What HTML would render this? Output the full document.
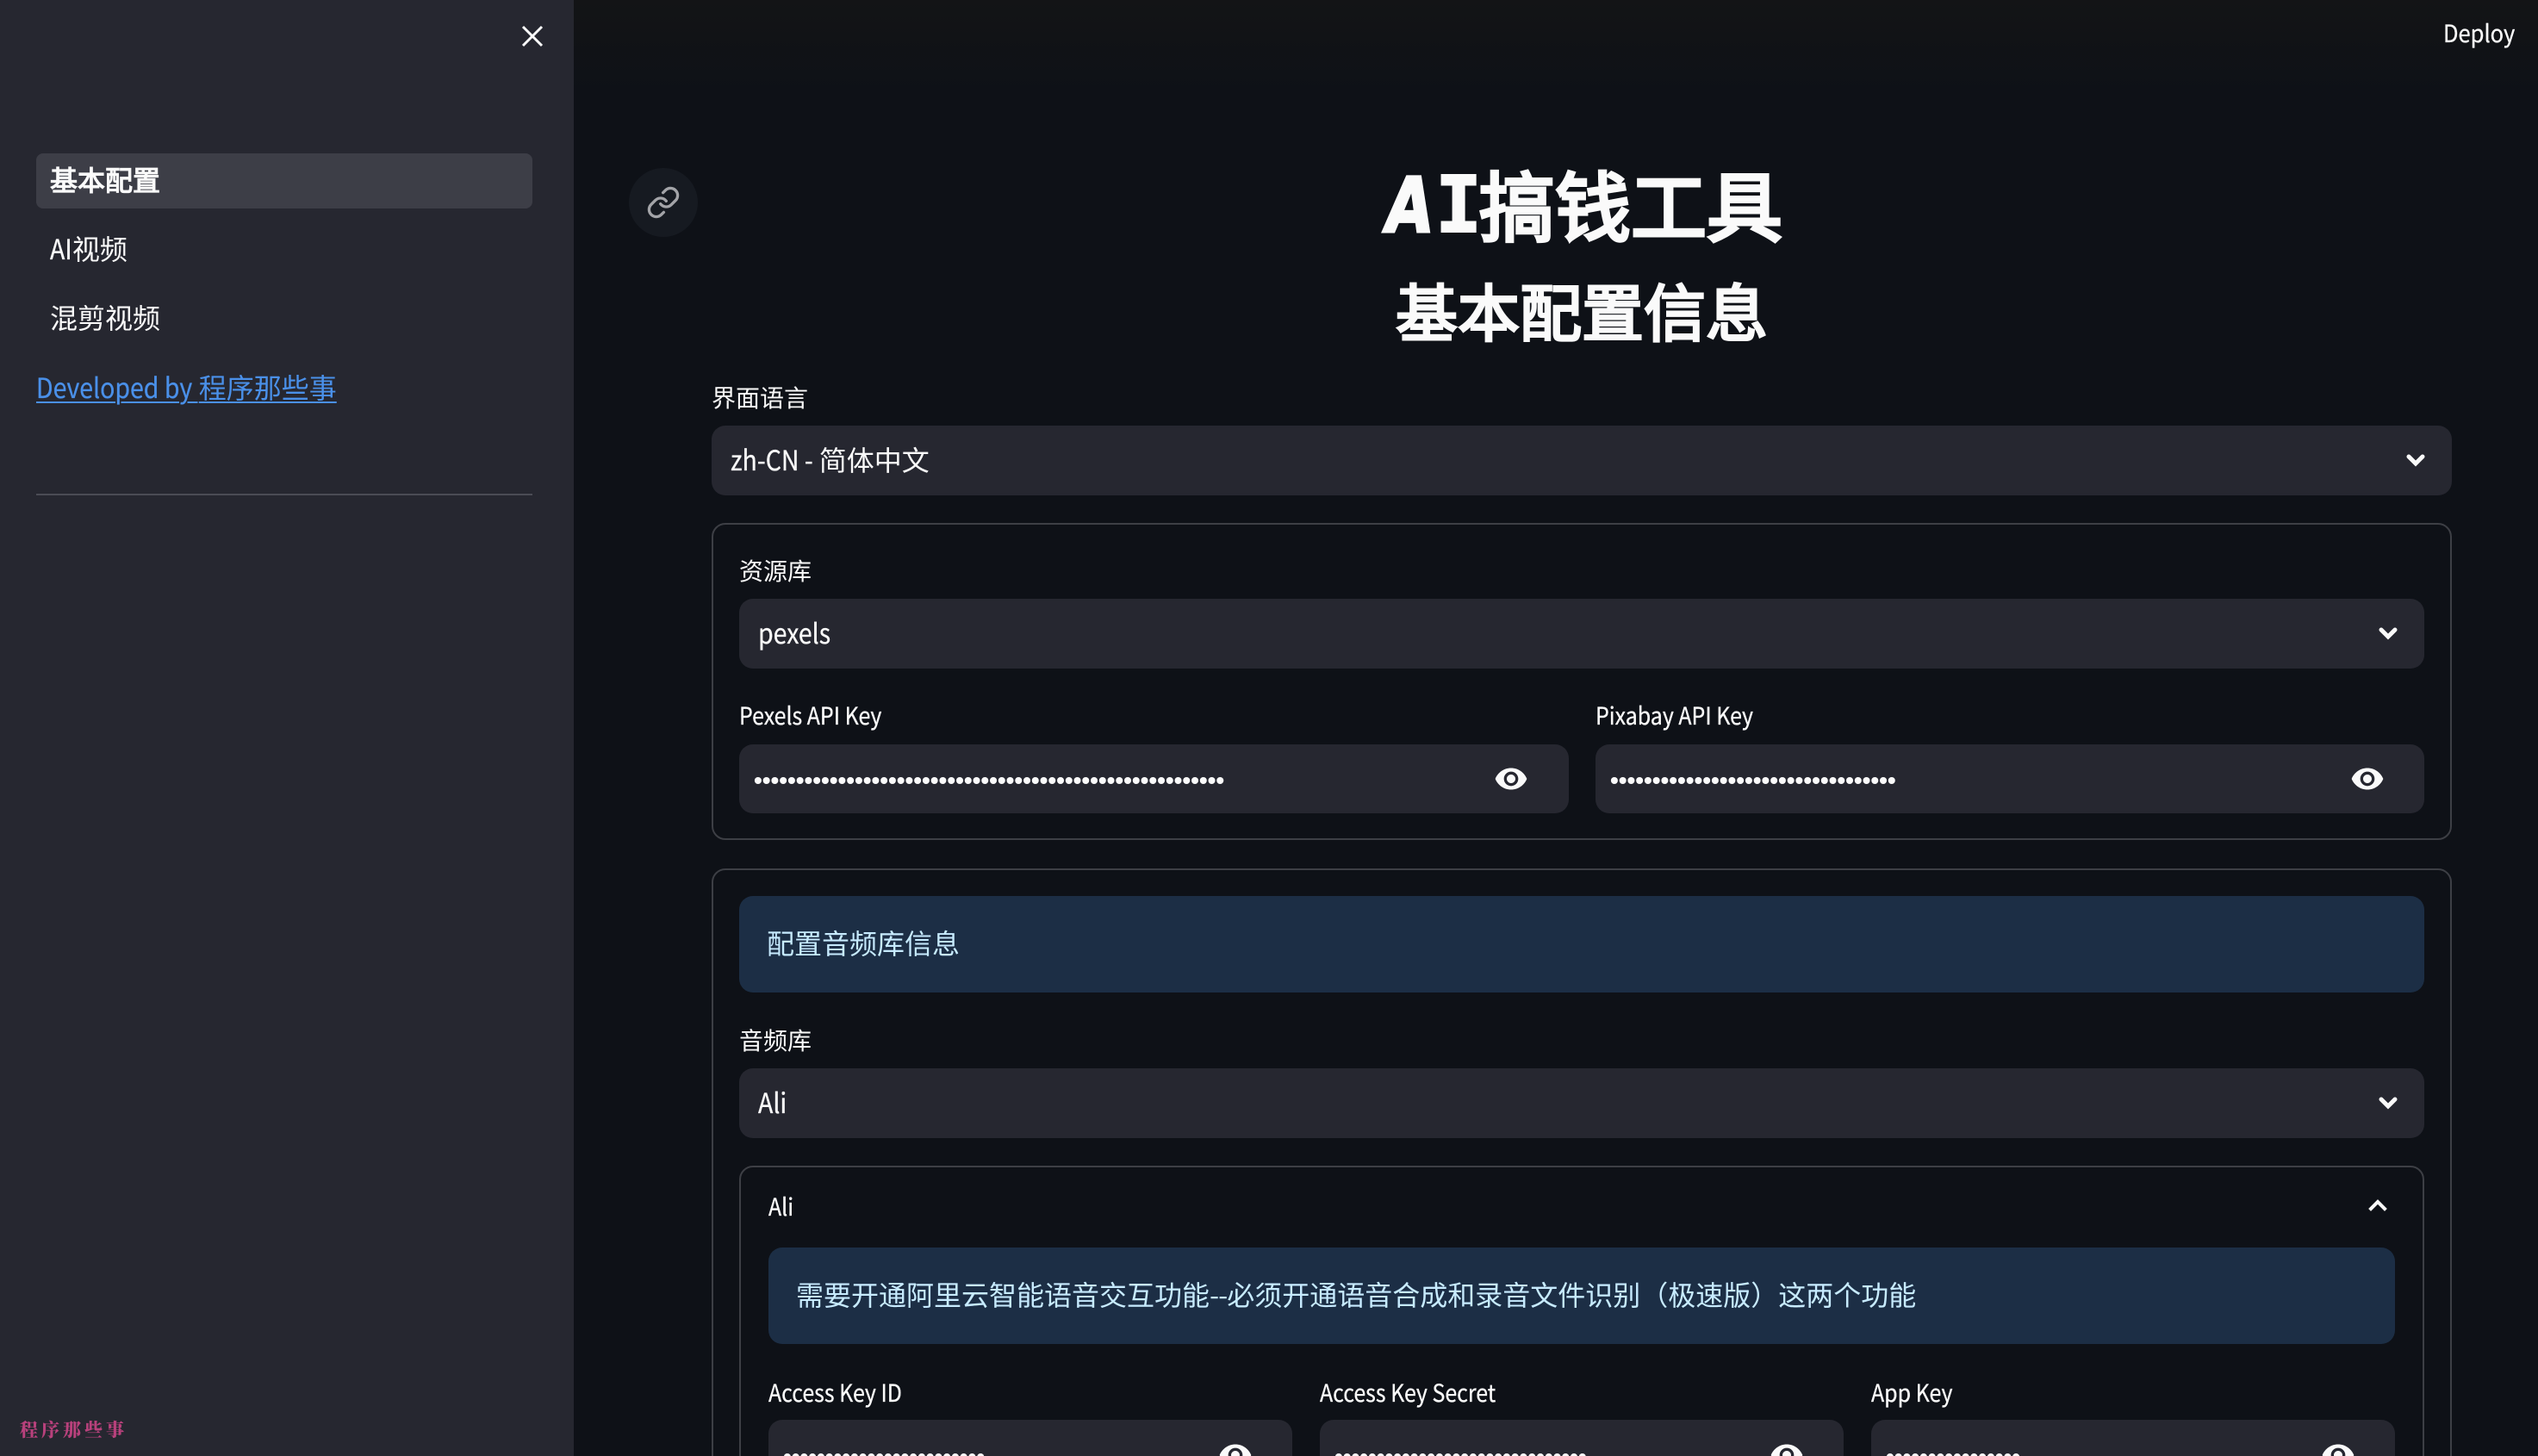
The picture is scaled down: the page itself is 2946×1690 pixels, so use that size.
<!DOCTYPE html>
<html lang="zh-CN"><head><meta charset="utf-8"><title>AI搞钱工具</title>
<style>
html,body{margin:0;padding:0;width:2946px;height:1690px;overflow:hidden;background:#0e1117}
body{position:relative;font-family:"Noto Sans CJK SC","Liberation Sans",sans-serif;color:#fafafa}
.a{position:absolute}
.t{position:absolute;white-space:nowrap;line-height:44px;height:44px}
.l{font-size:28px}
.m{font-size:32px}
.n{transform:scaleX(.89);transform-origin:0 50%;-webkit-text-stroke:.3px currentColor}
.s{display:inline-block;transform:scaleX(.89);transform-origin:0 50%;-webkit-text-stroke:.3px currentColor}
.f{position:absolute;background:#262730;border-radius:16px}
.b{position:absolute;box-sizing:border-box;border:2px solid #3d3f45;border-radius:16px}
.i{position:absolute;background:#1c2e45;border-radius:16px}
.c{color:#c7ebff}
.d{position:absolute;white-space:nowrap;font-family:"Liberation Sans",sans-serif;font-size:28px;line-height:20px;letter-spacing:-.05px;color:#fafafa;font-weight:bold}
svg{position:absolute;display:block}
</style></head><body>
<div class="a" style="left:666px;top:0;width:2280px;height:110px;background:linear-gradient(#131416,#0e1117)"></div>
<div class="a" style="left:0;top:0;width:666px;height:1690px;background:#262730"></div>

<svg style="left:604px;top:28px" width="28" height="28" viewBox="0 0 28 28" fill="none" stroke="#fafafa" stroke-width="3"><path d="M3 3L25 25M25 3L3 25"/></svg>
<div class="a" style="left:42px;top:178px;width:576px;height:64px;background:#3d3e47;border-radius:8px"></div>
<div class="t m" style="left:58px;top:186px;-webkit-text-stroke:1.2px #fafafa">基本配置</div>
<div class="t m" style="left:58px;top:266px"><span class="s" style="margin-right:-3px">AI</span>视频</div>
<div class="t m" style="left:58px;top:346px">混剪视频</div>
<div class="t m" style="left:42px;top:427px;color:#4a90e9;text-decoration:underline;text-underline-offset:4px;text-decoration-thickness:2px"><span class="s" style="margin-right:-22px;text-decoration:underline;text-underline-offset:4px;text-decoration-thickness:2px">Developed by&nbsp;</span>程序那些事</div>
<div class="a" style="left:42px;top:573px;width:576px;height:2px;background:#4b4c55"></div>
<div class="t" style="left:23px;top:1637px;font-family:'Noto Serif CJK SC',serif;font-weight:900;font-size:21px;letter-spacing:4px;color:#b8417c">程序那些事</div>

<div class="t l" style="left:2836px;top:16px;transform:scaleX(.91);transform-origin:0 50%;-webkit-text-stroke:.3px #fafafa">Deploy</div>

<div class="a" style="left:730px;top:195px;width:80px;height:80px;border-radius:50%;background:#161a21"></div>
<svg style="left:750px;top:215px" width="40" height="40" viewBox="0 0 24 24" fill="none" stroke="#a3a4a8" stroke-width="2" stroke-linecap="round" stroke-linejoin="round"><path d="M10 13a5 5 0 0 0 7.54.54l3-3a5 5 0 0 0-7.07-7.07l-1.72 1.71"/><path d="M14 11a5 5 0 0 0-7.54-.54l-3 3a5 5 0 0 0 7.07 7.07l1.71-1.71"/></svg>

<div class="a" style="left:1602px;top:184px;font-family:'DejaVu Sans',sans-serif;font-size:88px;line-height:110px;font-weight:700;white-space:nowrap;transform:skewX(-8deg) scaleX(.8);-webkit-text-stroke:3px #fafafa">A</div>
<div class="a" style="left:1666px;top:184px;font-family:'DejaVu Sans Mono',monospace;font-size:90px;line-height:110px;font-weight:700;white-space:nowrap;-webkit-text-stroke:2px #fafafa">I</div>
<div class="a" style="left:1717px;top:181px;font-size:88px;line-height:110px;font-weight:400;white-space:nowrap;-webkit-text-stroke:4px #fafafa">搞钱工具</div>
<div class="a" style="left:826px;top:313px;width:2020px;text-align:center;font-size:72px;line-height:92px;font-weight:400;white-space:nowrap;-webkit-text-stroke:3px #fafafa">基本配置信息</div>

<div class="t l" style="left:826px;top:439px">界面语言</div>
<div class="f" style="left:826px;top:494px;width:2020px;height:81px"></div>
<div class="t m" style="left:848px;top:511px"><span class="s" style="margin-right:-12px">zh-CN -&nbsp;</span>简体中文</div>
<svg style="left:2792px;top:526px" width="24" height="16" viewBox="0 0 24 16" fill="none" stroke="#fafafa" stroke-width="5" stroke-linecap="round"><path d="M4 4L12 12L20 4"/></svg>

<div class="b" style="left:826px;top:607px;width:2020px;height:368px"></div>
<div class="t l" style="left:858px;top:640px">资源库</div>
<div class="f" style="left:858px;top:695px;width:1956px;height:81px"></div>
<div class="t m n" style="left:880px;top:712px">pexels</div>
<svg style="left:2760px;top:727px" width="24" height="16" viewBox="0 0 24 16" fill="none" stroke="#fafafa" stroke-width="5" stroke-linecap="round"><path d="M4 4L12 12L20 4"/></svg>
<div class="t l n" style="left:858px;top:808px">Pexels API Key</div>
<div class="t l n" style="left:1852px;top:808px">Pixabay API Key</div>
<div class="f" style="left:858px;top:864px;width:963px;height:80px"></div>
<div class="f" style="left:1852px;top:864px;width:962px;height:80px"></div>
<div class="d" style="left:875px;top:896px">••••••••••••••••••••••••••••••••••••••••••••••••••••••••</div>
<div class="d" style="left:1869px;top:896px">••••••••••••••••••••••••••••••••••</div>
<svg style="left:1734px;top:884px" width="40" height="40" viewBox="0 0 24 24" fill="#fafafa"><path d="M12 4.5C7 4.5 2.73 7.61 1 12c1.73 4.39 6 7.5 11 7.5s9.27-3.11 11-7.5c-1.73-4.39-6-7.5-11-7.5zM12 17c-2.76 0-5-2.24-5-5s2.24-5 5-5 5 2.24 5 5-2.24 5-5 5zm0-8c-1.66 0-3 1.34-3 3s1.34 3 3 3 3-1.34 3-3-1.34-3-3-3z"/></svg>
<svg style="left:2728px;top:884px" width="40" height="40" viewBox="0 0 24 24" fill="#fafafa"><path d="M12 4.5C7 4.5 2.73 7.61 1 12c1.73 4.39 6 7.5 11 7.5s9.27-3.11 11-7.5c-1.73-4.39-6-7.5-11-7.5zM12 17c-2.76 0-5-2.24-5-5s2.24-5 5-5 5 2.24 5 5-2.24 5-5 5zm0-8c-1.66 0-3 1.34-3 3s1.34 3 3 3 3-1.34 3-3-1.34-3-3-3z"/></svg>

<div class="b" style="left:826px;top:1008px;width:2020px;height:760px"></div>
<div class="i" style="left:858px;top:1040px;width:1956px;height:112px"></div>
<div class="t m c" style="left:890px;top:1072px">配置音频库信息</div>
<div class="t l" style="left:858px;top:1185px">音频库</div>
<div class="f" style="left:858px;top:1240px;width:1956px;height:81px"></div>
<div class="t m n" style="left:880px;top:1257px">Ali</div>
<svg style="left:2760px;top:1272px" width="24" height="16" viewBox="0 0 24 16" fill="none" stroke="#fafafa" stroke-width="5" stroke-linecap="round"><path d="M4 4L12 12L20 4"/></svg>

<div class="b" style="left:858px;top:1353px;width:1956px;height:400px"></div>
<div class="t l n" style="left:892px;top:1378px">Ali</div>
<svg style="left:2748px;top:1391px" width="24" height="16" viewBox="0 0 24 16" fill="none" stroke="#fafafa" stroke-width="4" stroke-linecap="square"><path d="M4 12L12 4L20 12"/></svg>
<div class="i" style="left:892px;top:1448px;width:1888px;height:112px"></div>
<div class="t m c" style="left:924px;top:1480px">需要开通阿里云智能语音交互功能<span style="letter-spacing:-1px">--</span>必须开通语音合成和录音文件识别（极速版）这两个功能</div>
<div class="t l n" style="left:892px;top:1594px">Access Key ID</div>
<div class="t l n" style="left:1532px;top:1594px">Access Key Secret</div>
<div class="t l n" style="left:2172px;top:1594px">App Key</div>
<div class="f" style="left:892px;top:1648px;width:608px;height:80px"></div>
<div class="f" style="left:1532px;top:1648px;width:608px;height:80px"></div>
<div class="f" style="left:2172px;top:1648px;width:608px;height:80px"></div>
<div class="d" style="left:909px;top:1681px">••••••••••••••••••••••••</div>
<div class="d" style="left:1549px;top:1681px">••••••••••••••••••••••••••••••</div>
<div class="d" style="left:2189px;top:1681px">••••••••••••••••</div>
<svg style="left:1414px;top:1669px" width="40" height="40" viewBox="0 0 24 24" fill="#fafafa"><path d="M12 4.5C7 4.5 2.73 7.61 1 12c1.73 4.39 6 7.5 11 7.5s9.27-3.11 11-7.5c-1.73-4.39-6-7.5-11-7.5zM12 17c-2.76 0-5-2.24-5-5s2.24-5 5-5 5 2.24 5 5-2.24 5-5 5zm0-8c-1.66 0-3 1.34-3 3s1.34 3 3 3 3-1.34 3-3-1.34-3-3-3z"/></svg>
<svg style="left:2054px;top:1669px" width="40" height="40" viewBox="0 0 24 24" fill="#fafafa"><path d="M12 4.5C7 4.5 2.73 7.61 1 12c1.73 4.39 6 7.5 11 7.5s9.27-3.11 11-7.5c-1.73-4.39-6-7.5-11-7.5zM12 17c-2.76 0-5-2.24-5-5s2.24-5 5-5 5 2.24 5 5-2.24 5-5 5zm0-8c-1.66 0-3 1.34-3 3s1.34 3 3 3 3-1.34 3-3-1.34-3-3-3z"/></svg>
<svg style="left:2694px;top:1669px" width="40" height="40" viewBox="0 0 24 24" fill="#fafafa"><path d="M12 4.5C7 4.5 2.73 7.61 1 12c1.73 4.39 6 7.5 11 7.5s9.27-3.11 11-7.5c-1.73-4.39-6-7.5-11-7.5zM12 17c-2.76 0-5-2.24-5-5s2.24-5 5-5 5 2.24 5 5-2.24 5-5 5zm0-8c-1.66 0-3 1.34-3 3s1.34 3 3 3 3-1.34 3-3-1.34-3-3-3z"/></svg>
</body></html>
